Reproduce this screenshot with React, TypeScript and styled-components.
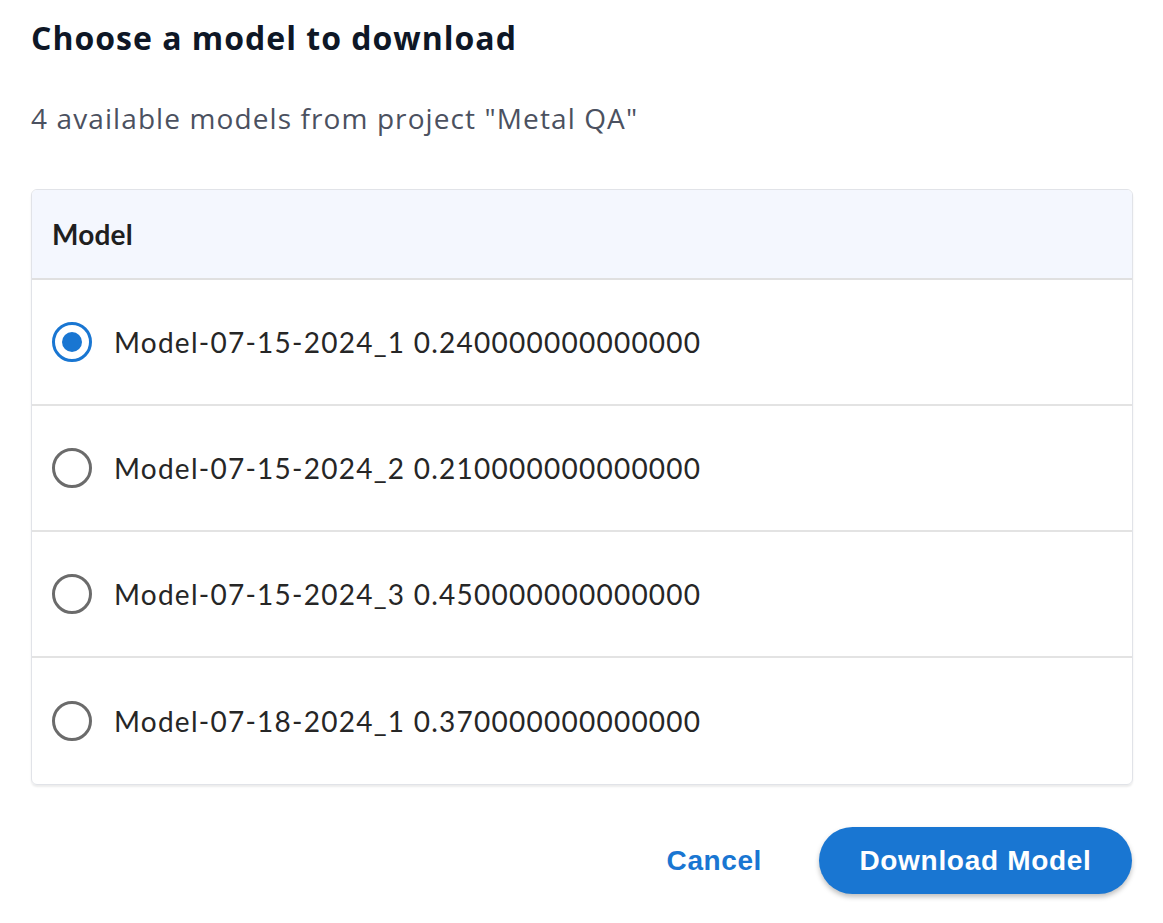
import React, { useState } from "react";
import styled, { createGlobalStyle } from "styled-components";

const Global = createGlobalStyle`
  html, body { margin: 0; padding: 0; background: #ffffff; }
  * { box-sizing: border-box; }
`;

const Dialog = styled.div`
  width: 1163px;
  height: 923px;
  padding: 18px 30px 0 31px;
  display: flex;
  flex-direction: column;
  font-family: Lato, "Noto Sans", sans-serif;
`;

const Title = styled.h1`
  margin: 0;
  font-family: "Open Sans", "Noto Sans", sans-serif;
  font-size: 32px;
  font-weight: 700;
  line-height: 40px;
  color: #0e1726;
  letter-spacing: 1px;
`;

const Subtitle = styled.p`
  margin: 42px 0 0 0;
  font-family: "Open Sans", "Noto Sans", sans-serif;
  font-size: 28px;
  line-height: 36px;
  color: #4b5160;
  letter-spacing: 1.1px;
`;

const Table = styled.div`
  margin-top: 53px;
  width: 1102px;
  border: 1px solid #e1e3e8;
  border-radius: 6px;
  box-shadow: 0 2px 2px rgba(0, 0, 0, 0.08);
  overflow: hidden;
`;

const HeaderRow = styled.div`
  height: 90px;
  background: #f4f7fe;
  border-bottom: 2px solid #e0e0e0;
  display: flex;
  align-items: center;
  padding-left: 20px;
  font-size: 28px;
  font-weight: 700;
  color: #1f1f1f;
  letter-spacing: 0.2px;
`;

const Row = styled.label<{ $last?: boolean }>`
  height: 126px;
  display: flex;
  align-items: center;
  gap: 22px;
  padding-left: 20px;
  border-bottom: ${(p) => (p.$last ? "none" : "2px solid #e3e3e3")};
  cursor: pointer;
`;

const Radio = styled.span<{ $checked: boolean }>`
  width: 40px;
  height: 40px;
  border-radius: 50%;
  border: 3px solid ${(p) => (p.$checked ? "#1976d2" : "#6b6b6b")};
  display: flex;
  align-items: center;
  justify-content: center;
  flex-shrink: 0;
  &::after {
    content: "";
    width: 20px;
    height: 20px;
    border-radius: 50%;
    background: #1976d2;
    display: ${(p) => (p.$checked ? "block" : "none")};
  }
`;

const RowText = styled.span`
  font-size: 28px;
  color: #262626;
  letter-spacing: 1.25px;
`;

const Actions = styled.div`
  margin-top: 42px;
  display: flex;
  justify-content: flex-end;
  align-items: center;
  gap: 57px;
  padding-right: 1px;
`;

const TextButton = styled.button`
  background: none;
  border: none;
  padding: 0;
  font-family: "Liberation Sans", Arial, sans-serif;
  font-weight: 700;
  font-size: 28px;
  color: #1976d2;
  letter-spacing: 0.6px;
  cursor: pointer;
`;

const PrimaryButton = styled.button`
  width: 313px;
  height: 67px;
  border-radius: 34px;
  border: none;
  background: #1976d2;
  color: #ffffff;
  font-family: "Liberation Sans", Arial, sans-serif;
  font-weight: 700;
  font-size: 28px;
  letter-spacing: 0.7px;
  box-shadow: 0 3px 5px rgba(0, 0, 0, 0.25);
  cursor: pointer;
`;

const models = [
  "Model-07-15-2024_1 0.240000000000000",
  "Model-07-15-2024_2 0.210000000000000",
  "Model-07-15-2024_3 0.450000000000000",
  "Model-07-18-2024_1 0.370000000000000",
];

export default function App() {
  const [selected, setSelected] = useState(0);
  return (
    <>
      <Global />
      <Dialog>
        <Title>Choose a model to download</Title>
        <Subtitle>4 available models from project "Metal QA"</Subtitle>
        <Table>
          <HeaderRow>Model</HeaderRow>
          {models.map((m, i) => (
            <Row key={m} $last={i === models.length - 1} onClick={() => setSelected(i)}>
              <Radio $checked={selected === i} />
              <RowText>{m}</RowText>
            </Row>
          ))}
        </Table>
        <Actions>
          <TextButton>Cancel</TextButton>
          <PrimaryButton>Download Model</PrimaryButton>
        </Actions>
      </Dialog>
    </>
  );
}
